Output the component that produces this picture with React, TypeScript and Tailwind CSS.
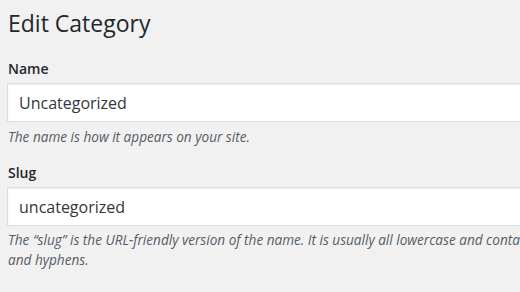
import React from "react";

export default function App() {
  const font = { fontFamily: '"Open Sans", "Noto Sans", sans-serif' };
  return (
    <div
      className="w-[520px] h-[292px] overflow-hidden bg-[#f1f1f1] text-[#23282d]"
      style={font}
    >
      <div className="w-[800px] pl-[8px] pt-[8px]">
        <h1 className="text-[23px] leading-[30px] font-normal text-[#23282d]">
          Edit Category
        </h1>

        <div className="mt-[21px] text-[14px] leading-[20px] font-semibold text-[#23282d]">
          Name
        </div>
        <div className="mt-[4px] -ml-[1px] h-[39px] w-[700px] border border-[#dddddd] bg-white shadow-[inset_0_1px_2px_rgba(0,0,0,0.07)] flex items-center pl-[11px] text-[16px] text-[#32373c]">
          Uncategorized
        </div>
        <p className="mt-[5px] text-[13.6px] leading-[20px] italic text-[#555d66]">
          The name is how it appears on your site.
        </p>

        <div className="mt-[16px] text-[14px] leading-[20px] font-semibold text-[#23282d]">
          Slug
        </div>
        <div className="mt-[4px] -ml-[1px] h-[39px] w-[700px] border border-[#dddddd] bg-white shadow-[inset_0_1px_2px_rgba(0,0,0,0.07)] flex items-center pl-[11px] text-[16px] text-[#32373c]">
          uncategorized
        </div>
        <p className="mt-[4px] text-[13.6px] leading-[20px] italic text-[#555d66] whitespace-nowrap">
          The “slug” is the URL-friendly version of the name. It is usually all lowercase and contains only letters, numbers,
          <br />
          and hyphens.
        </p>

        <div className="mt-[18px] text-[14px] leading-[20px] font-semibold text-[#23282d]">
          Parent
        </div>
      </div>
    </div>
  );
}
